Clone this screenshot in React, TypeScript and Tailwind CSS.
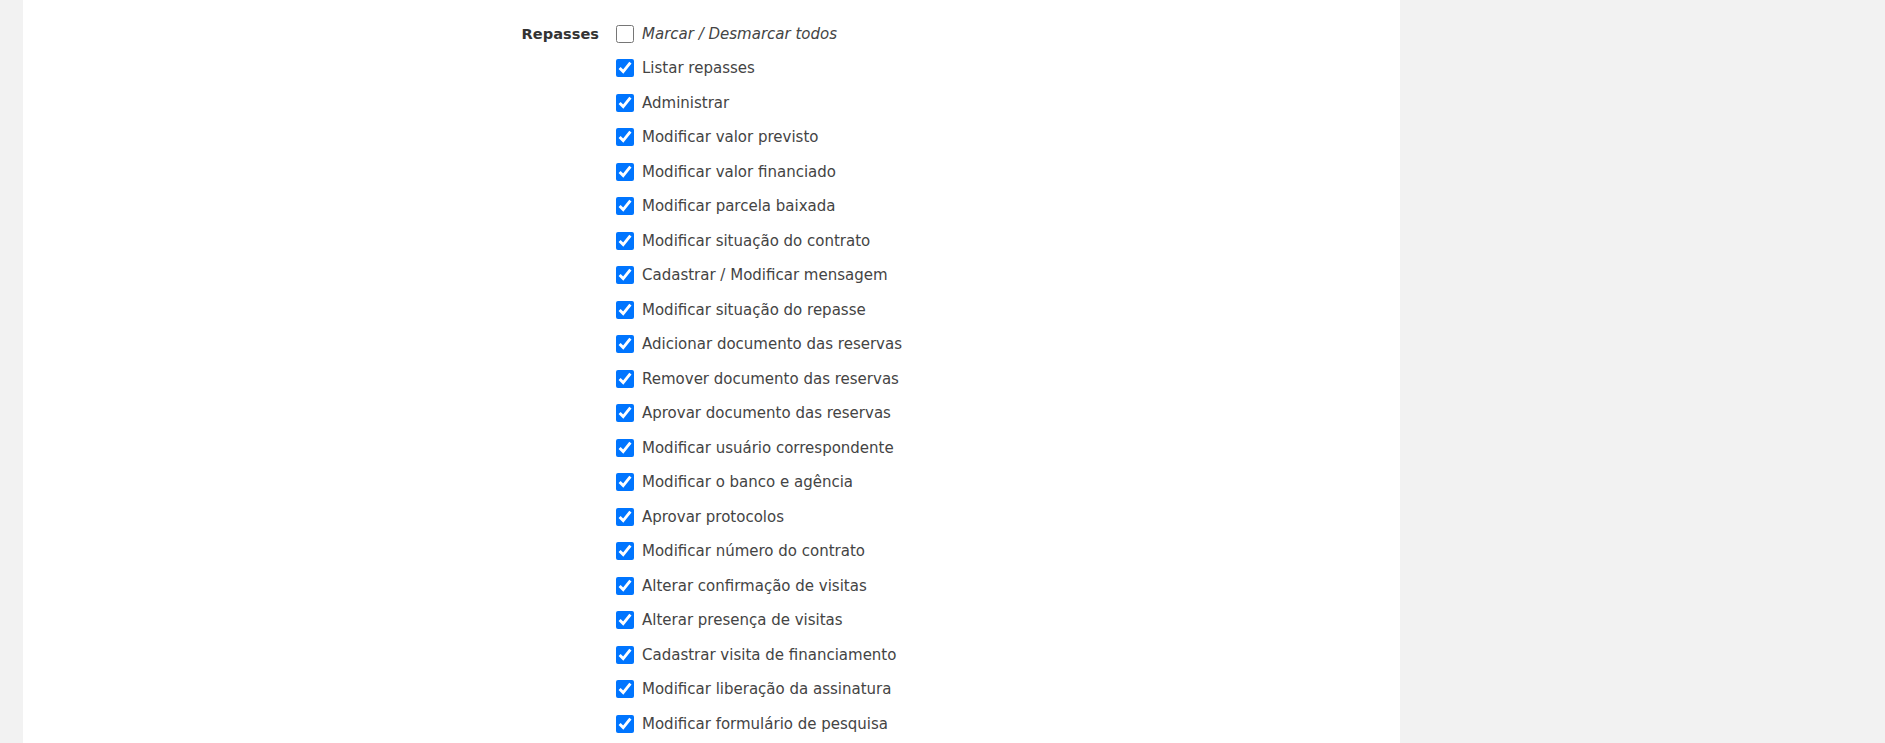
import React from 'react';

// Permissões do grupo "Repasses"
const permissions: string[] = [
  'Listar repasses',
  'Administrar',
  'Modificar valor previsto',
  'Modificar valor financiado',
  'Modificar parcela baixada',
  'Modificar situação do contrato',
  'Cadastrar / Modificar mensagem',
  'Modificar situação do repasse',
  'Adicionar documento das reservas',
  'Remover documento das reservas',
  'Aprovar documento das reservas',
  'Modificar usuário correspondente',
  'Modificar o banco e agência',
  'Aprovar protocolos',
  'Modificar número do contrato',
  'Alterar confirmação de visitas',
  'Alterar presença de visitas',
  'Cadastrar visita de financiamento',
  'Modificar liberação da assinatura',
  'Modificar formulário de pesquisa',
];

const CheckRow: React.FC<{ label: string; checked: boolean; italic?: boolean }> = ({
  label,
  checked,
  italic,
}) => (
  <label className="flex items-center h-[34.5px] gap-[8px] cursor-pointer">
    <input
      type="checkbox"
      defaultChecked={checked}
      className="w-[18px] h-[18px] m-0 accent-[#0075ff]"
    />
    <span className={`text-[15px] text-[#444] ${italic ? 'italic' : ''}`}>{label}</span>
  </label>
);

const App: React.FC = () => {
  return (
    <div
      className="min-h-screen h-[743px] bg-[#f2f2f2] overflow-hidden"
      style={{ fontFamily: '"DejaVu Sans", Verdana, sans-serif' }}
    >
      <div className="ml-[23px] w-[1377px] h-full bg-white">
        <div className="flex pt-[16.5px]">
          {/* Label column */}
          <div className="w-[576px] h-[34.5px] flex items-center justify-end">
            <span className="text-[14.6px] font-bold text-[#333]">Repasses</span>
          </div>

          {/* Checkbox list */}
          <div className="flex flex-col pl-[17px]">
            <CheckRow label="Marcar / Desmarcar todos" checked={false} italic />
            {permissions.map((p) => (
              <CheckRow key={p} label={p} checked />
            ))}
          </div>
        </div>
      </div>
    </div>
  );
};

export default App;
